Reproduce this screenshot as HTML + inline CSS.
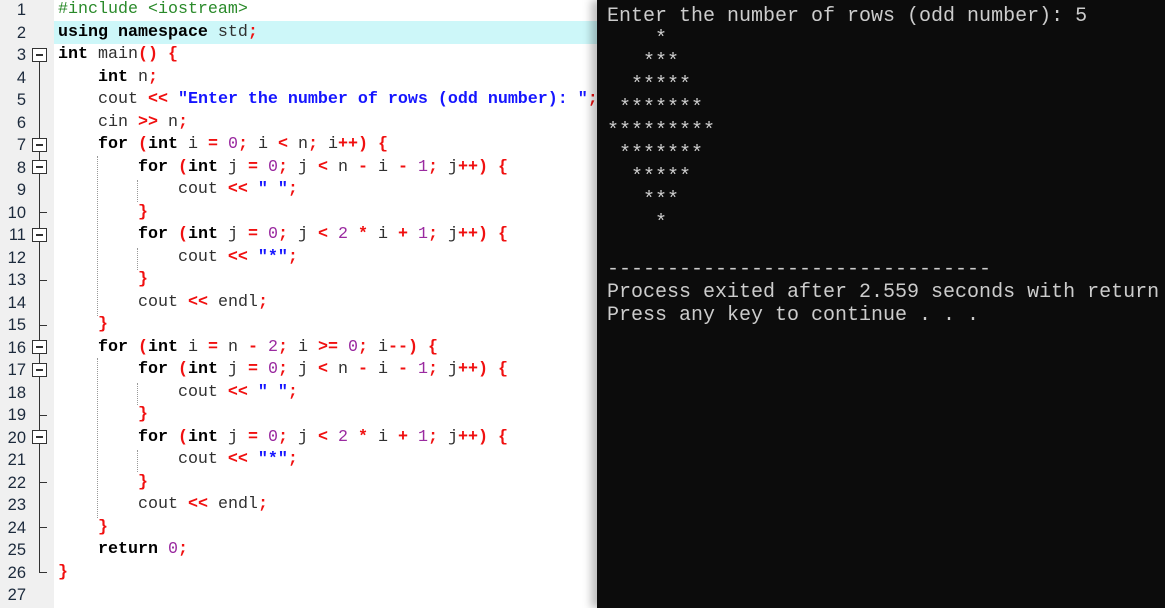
<!DOCTYPE html>
<html><head><meta charset="utf-8"><style>
*{margin:0;padding:0;box-sizing:border-box}
body{width:1165px;height:608px;overflow:hidden;background:#fff;position:relative;font-family:"Liberation Mono",monospace}
#gut{position:absolute;left:0;top:0;width:54px;height:608px;background:#f0f0f0}
#hl{position:absolute;left:54px;top:21px;width:543px;height:23px;background:#cdf7f9}
.ln{position:absolute;left:0;width:26px;text-align:right;font-family:"Liberation Sans",sans-serif;font-size:16.5px;color:#1c2a3c;line-height:22.5px;height:22.5px}
.cl{position:absolute;left:58px;font-size:16.67px;line-height:22.5px;height:22.5px;white-space:pre;color:#303030}
.k{font-weight:bold;color:#000}.s{font-weight:bold;color:#1515ff}.n{color:#9a2aa0}.o{font-weight:bold;color:#f01010}.c{color:#2a8a2a}
.box{position:absolute;left:32px;width:15px;height:14px;border:1px solid #333;background:#fff}
.box:after{content:"";position:absolute;left:3px;top:5px;width:7px;height:1.5px;background:#333}
.tick{position:absolute;left:39px;width:8px;height:1px;background:#333}
.vl{position:absolute;left:39px;width:1px;background:#333}
.g{position:absolute;width:0;border-left:1px dotted #999}
#con{position:absolute;left:597px;top:0;width:568px;height:608px;overflow:hidden;background:#0c0c0c;color:#cccccc;font-size:20px;line-height:23px;white-space:pre;padding:5px 0 0 10px;box-shadow:-6px 0 8px rgba(0,0,0,.25)}
</style></head><body>
<div id="gut"></div><div id="hl"></div>
<div class="ln" style="top:-1px">1</div><div class="ln" style="top:21.5px">2</div><div class="ln" style="top:44px">3</div><div class="ln" style="top:66.5px">4</div><div class="ln" style="top:89px">5</div><div class="ln" style="top:111.5px">6</div><div class="ln" style="top:134px">7</div><div class="ln" style="top:156.5px">8</div><div class="ln" style="top:179px">9</div><div class="ln" style="top:201.5px">10</div><div class="ln" style="top:224px">11</div><div class="ln" style="top:246.5px">12</div><div class="ln" style="top:269px">13</div><div class="ln" style="top:291.5px">14</div><div class="ln" style="top:314px">15</div><div class="ln" style="top:336.5px">16</div><div class="ln" style="top:359px">17</div><div class="ln" style="top:381.5px">18</div><div class="ln" style="top:404px">19</div><div class="ln" style="top:426.5px">20</div><div class="ln" style="top:449px">21</div><div class="ln" style="top:471.5px">22</div><div class="ln" style="top:494px">23</div><div class="ln" style="top:516.5px">24</div><div class="ln" style="top:539px">25</div><div class="ln" style="top:561.5px">26</div><div class="ln" style="top:584px">27</div>
<div class="vl" style="top:54px;height:519px"></div>
<div class="tick" style="top:572px"></div>
<div class="box" style="top:48px"></div><div class="box" style="top:138px"></div><div class="box" style="top:160px"></div><div class="box" style="top:228px"></div><div class="box" style="top:340px"></div><div class="box" style="top:363px"></div><div class="box" style="top:430px"></div>
<div class="tick" style="top:212px"></div><div class="tick" style="top:280px"></div><div class="tick" style="top:325px"></div><div class="tick" style="top:415px"></div><div class="tick" style="top:482px"></div><div class="tick" style="top:527px"></div>
<div class="g" style="left:97px;top:156px;height:160px"></div>
<div class="g" style="left:137px;top:180px;height:22px"></div>
<div class="g" style="left:137px;top:248px;height:22px"></div>
<div class="g" style="left:97px;top:358px;height:160px"></div>
<div class="g" style="left:137px;top:383px;height:22px"></div>
<div class="g" style="left:137px;top:450px;height:22px"></div>
<div class="cl" style="top:-1px"><span class="c">#include &lt;iostream&gt;</span></div>
<div class="cl" style="top:21.5px"><span class="k">using namespace</span> std<span class="o">;</span></div>
<div class="cl" style="top:44px"><span class="k">int</span> main<span class="o">()</span> <span class="o">{</span></div>
<div class="cl" style="top:66.5px">    <span class="k">int</span> n<span class="o">;</span></div>
<div class="cl" style="top:89px">    cout <span class="o">&lt;&lt;</span> <span class="s">"Enter the number of rows (odd number): "</span><span class="o">;</span></div>
<div class="cl" style="top:111.5px">    cin <span class="o">&gt;&gt;</span> n<span class="o">;</span></div>
<div class="cl" style="top:134px">    <span class="k">for</span> <span class="o">(</span><span class="k">int</span> i <span class="o">=</span> <span class="n">0</span><span class="o">;</span> i <span class="o">&lt;</span> n<span class="o">;</span> i<span class="o">++)</span> <span class="o">{</span></div>
<div class="cl" style="top:156.5px">        <span class="k">for</span> <span class="o">(</span><span class="k">int</span> j <span class="o">=</span> <span class="n">0</span><span class="o">;</span> j <span class="o">&lt;</span> n <span class="o">-</span> i <span class="o">-</span> <span class="n">1</span><span class="o">;</span> j<span class="o">++)</span> <span class="o">{</span></div>
<div class="cl" style="top:179px">            cout <span class="o">&lt;&lt;</span> <span class="s">" "</span><span class="o">;</span></div>
<div class="cl" style="top:201.5px">        <span class="o">}</span></div>
<div class="cl" style="top:224px">        <span class="k">for</span> <span class="o">(</span><span class="k">int</span> j <span class="o">=</span> <span class="n">0</span><span class="o">;</span> j <span class="o">&lt;</span> <span class="n">2</span> <span class="o">*</span> i <span class="o">+</span> <span class="n">1</span><span class="o">;</span> j<span class="o">++)</span> <span class="o">{</span></div>
<div class="cl" style="top:246.5px">            cout <span class="o">&lt;&lt;</span> <span class="s">"*"</span><span class="o">;</span></div>
<div class="cl" style="top:269px">        <span class="o">}</span></div>
<div class="cl" style="top:291.5px">        cout <span class="o">&lt;&lt;</span> endl<span class="o">;</span></div>
<div class="cl" style="top:314px">    <span class="o">}</span></div>
<div class="cl" style="top:336.5px">    <span class="k">for</span> <span class="o">(</span><span class="k">int</span> i <span class="o">=</span> n <span class="o">-</span> <span class="n">2</span><span class="o">;</span> i <span class="o">&gt;=</span> <span class="n">0</span><span class="o">;</span> i<span class="o">--)</span> <span class="o">{</span></div>
<div class="cl" style="top:359px">        <span class="k">for</span> <span class="o">(</span><span class="k">int</span> j <span class="o">=</span> <span class="n">0</span><span class="o">;</span> j <span class="o">&lt;</span> n <span class="o">-</span> i <span class="o">-</span> <span class="n">1</span><span class="o">;</span> j<span class="o">++)</span> <span class="o">{</span></div>
<div class="cl" style="top:381.5px">            cout <span class="o">&lt;&lt;</span> <span class="s">" "</span><span class="o">;</span></div>
<div class="cl" style="top:404px">        <span class="o">}</span></div>
<div class="cl" style="top:426.5px">        <span class="k">for</span> <span class="o">(</span><span class="k">int</span> j <span class="o">=</span> <span class="n">0</span><span class="o">;</span> j <span class="o">&lt;</span> <span class="n">2</span> <span class="o">*</span> i <span class="o">+</span> <span class="n">1</span><span class="o">;</span> j<span class="o">++)</span> <span class="o">{</span></div>
<div class="cl" style="top:449px">            cout <span class="o">&lt;&lt;</span> <span class="s">"*"</span><span class="o">;</span></div>
<div class="cl" style="top:471.5px">        <span class="o">}</span></div>
<div class="cl" style="top:494px">        cout <span class="o">&lt;&lt;</span> endl<span class="o">;</span></div>
<div class="cl" style="top:516.5px">    <span class="o">}</span></div>
<div class="cl" style="top:539px">    <span class="k">return</span> <span class="n">0</span><span class="o">;</span></div>
<div class="cl" style="top:561.5px"><span class="o">}</span></div>
<div id="con">Enter the number of rows (odd number): 5
    *
   ***
  *****
 *******
*********
 *******
  *****
   ***
    *

--------------------------------
Process exited after 2.559 seconds with return value 0
Press any key to continue . . .</div>
</body></html>
